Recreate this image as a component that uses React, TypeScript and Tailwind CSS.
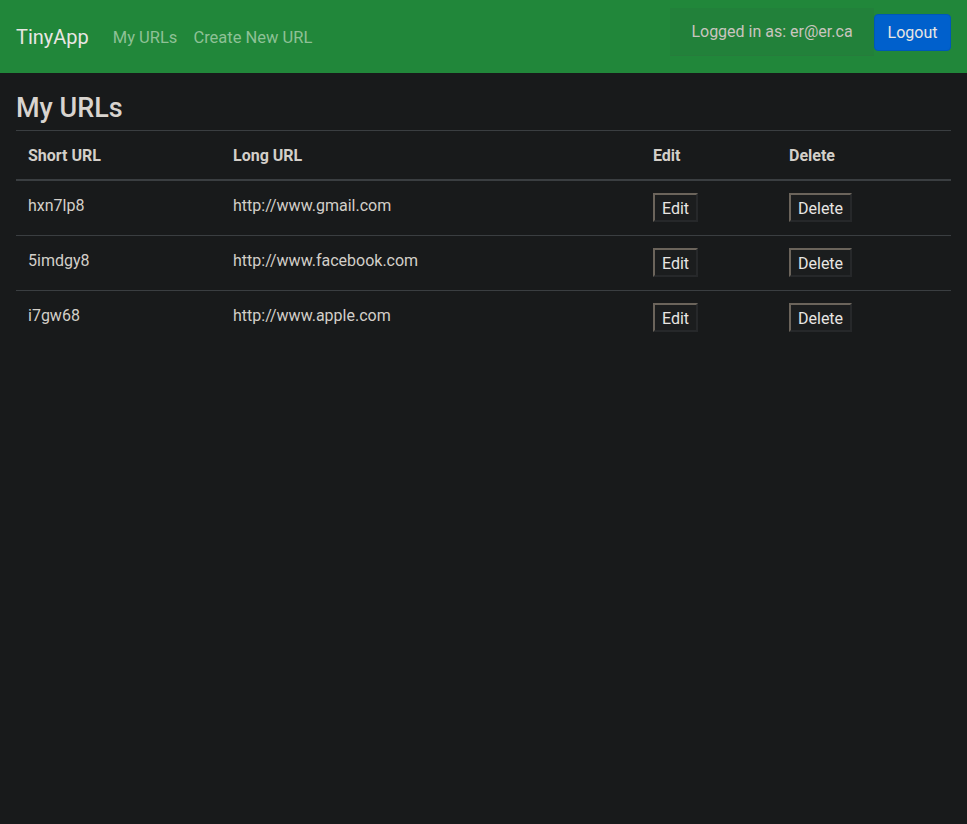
import type { ReactNode } from "react";

const urls = [
  { id: "hxn7lp8", long: "http://www.gmail.com" },
  { id: "5imdgy8", long: "http://www.facebook.com" },
  { id: "i7gw68", long: "http://www.apple.com" },
];

function OldButton({ children }: { children: ReactNode }) {
  return (
    <button className="h-[29px] px-[7px] pt-[3px] bg-[#1b1d1e] text-[#e8e6e3] text-[16px] leading-none border-2 border-t-[#6b645b] border-l-[#6b645b] border-b-[#26282a] border-r-[#26282a]">
      {children}
    </button>
  );
}

export default function App() {
  return (
    <div
      className="min-h-[824px] bg-[#181a1b] text-[#d3cfc9]"
      style={{ fontFamily: "Roboto, 'Liberation Sans', sans-serif" }}
    >
      <nav className="h-[73px] bg-[#21873a] flex items-start pt-2 px-4">
        <span className="text-[20px] text-[#e8e6e3] mr-6 mt-[15px] leading-[28px]">TinyApp</span>
        <a className="text-[16.5px] text-[#8ec196] mr-4 mt-[17px] leading-[26px]">My URLs</a>
        <a className="text-[16.5px] text-[#8ec196] mt-[17px] leading-[26px]">Create New URL</a>
        <div className="ml-auto flex items-start">
          <div className="h-[48px] w-[204px] pt-[1px] flex items-center justify-center bg-[#22813a] border-b border-[#267c3b] text-[16px] text-[#c9c5bf]">
            Logged in as: er@er.ca
          </div>
          <button className="h-[37px] w-[77px] mt-[6px] pt-[1px] rounded bg-[#0060cc] border border-[#0057b8] text-[16px] text-[#e8e6e3]">
            Logout
          </button>
        </div>
      </nav>

      <main className="px-4">
        <h3 className="text-[27px] font-medium text-[#d8d4cf] pt-[18px] pb-[5px] leading-[34px]">
          My URLs
        </h3>
        <table className="w-full table-fixed border-collapse text-[16px]">
          <colgroup>
            <col className="w-[205px]" />
            <col className="w-[420px]" />
            <col className="w-[136px]" />
            <col />
          </colgroup>
          <thead>
            <tr className="border-t border-[#3a3e41] border-b-2 border-b-[#3a3e41]">
              <th className="text-left font-bold px-3 pt-[2px] h-[49px]">Short URL</th>
              <th className="text-left font-bold px-3 pt-[2px]">Long URL</th>
              <th className="text-left font-bold px-3 pt-[2px]">Edit</th>
              <th className="text-left font-bold px-3 pt-[2px]">Delete</th>
            </tr>
          </thead>
          <tbody>
            {urls.map((u, i) => (
              <tr key={u.id} className={i < urls.length - 1 ? "border-b border-[#3a3e41]" : ""}>
                <td className={`px-3 align-top pt-[13px] leading-[24px] ${i === 0 ? "h-[56px]" : "h-[55px]"}`}>
                  {u.id}
                </td>
                <td className="px-3 align-top pt-[13px] leading-[24px]">{u.long}</td>
                <td className="px-3 align-top pt-[12px]">
                  <OldButton>Edit</OldButton>
                </td>
                <td className="px-3 align-top pt-[12px]">
                  <OldButton>Delete</OldButton>
                </td>
              </tr>
            ))}
          </tbody>
        </table>
      </main>
    </div>
  );
}
